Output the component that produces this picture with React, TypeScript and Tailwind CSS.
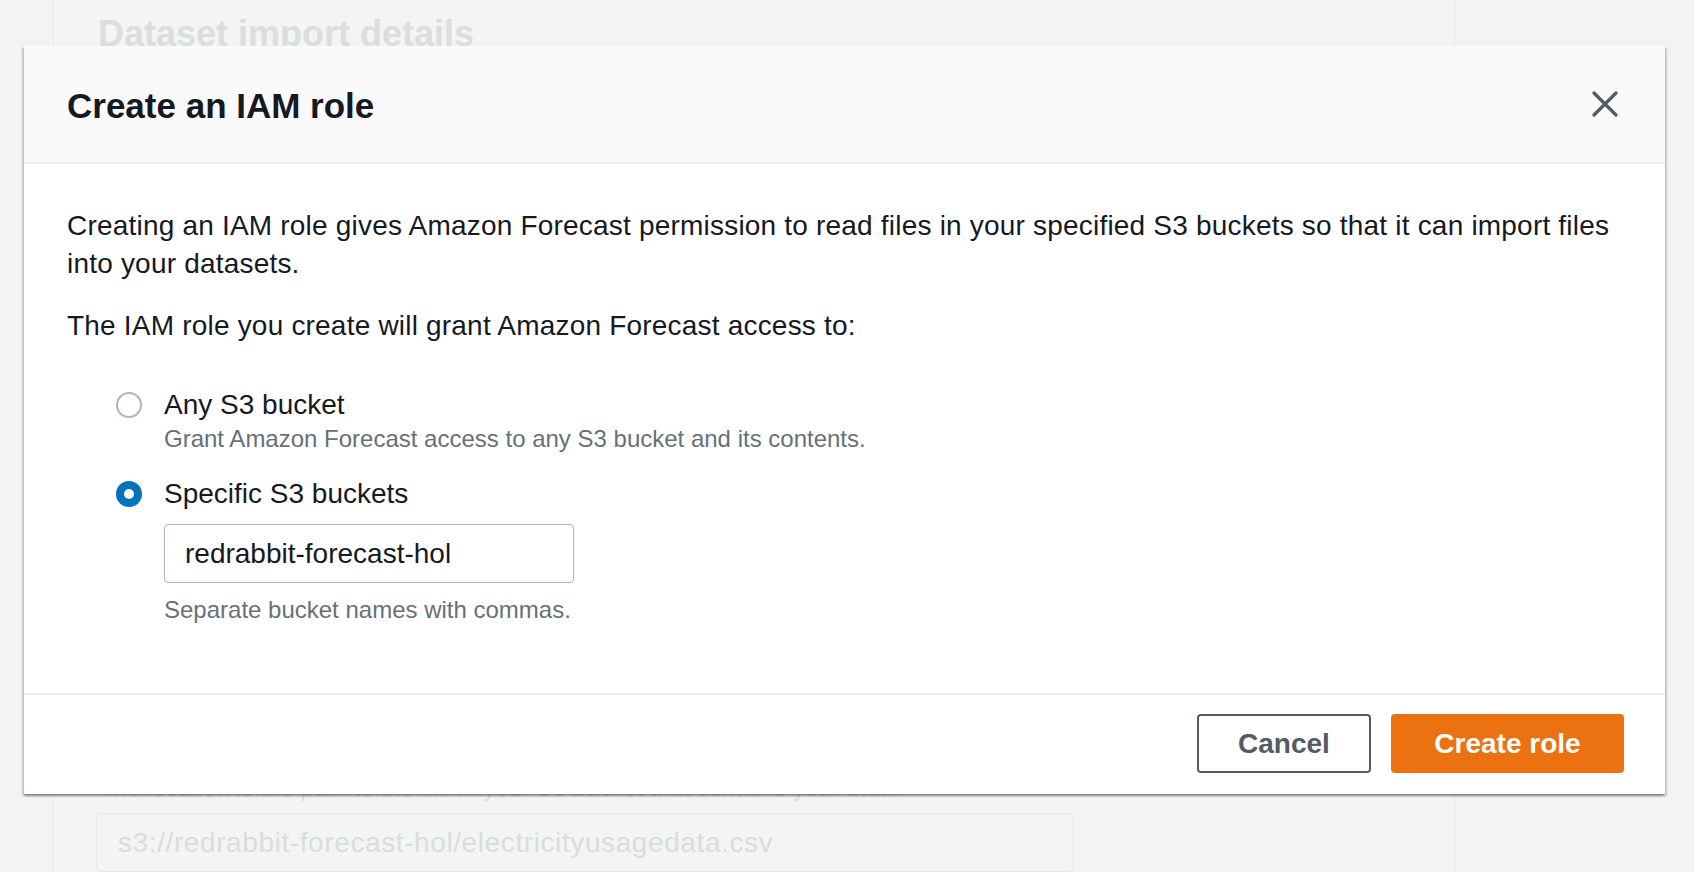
import React from "react";

function CloseIcon() {
  return (
    <svg width="26" height="26" viewBox="0 0 26 26" fill="none">
      <path
        d="M2 2L24 24M24 2L2 24"
        stroke="#545b64"
        strokeWidth="3.2"
        strokeLinecap="round"
      />
    </svg>
  );
}

function Radio({ checked }: { checked: boolean }) {
  return (
    <div className="flex h-[38px] items-center">
      {checked ? (
        <div className="flex h-[26px] w-[26px] items-center justify-center rounded-full bg-[#0073bb]">
          <div className="h-[10px] w-[10px] rounded-full bg-white" />
        </div>
      ) : (
        <div className="h-[26px] w-[26px] rounded-full border-2 border-[#aab7b8] bg-white" />
      )}
    </div>
  );
}

export default function App() {
  return (
    <div className="relative h-[872px] w-full overflow-hidden bg-[#f2f3f3] font-['Liberation_Sans',Arial,sans-serif]">
      {/* Page behind the dialog */}
      <div className="ml-[53px] h-full w-[1402px] border-x border-[#e9ebeb] bg-[#f3f4f4] pl-[42px]">
        <h2 className="ml-[2px] pt-[16px] text-[36px] leading-[36px] font-bold text-[#dadede]">
          Dataset import details
        </h2>
        <p className="ml-[3px] mt-[721px] text-[24px] leading-[30px] text-[#dadede]">
          The location is the path to the file in your S3 bucket that contains
          your data.
        </p>
        <div className="mt-[10px] flex h-[59px] w-[978px] items-center rounded-[4px] border border-[#e6e9e9] bg-[#f3f4f4] px-[21px] text-[28px] tracking-[0.6px] text-[#d9dddd]">
          s3://redrabbit-forecast-hol/electricityusagedata.csv
        </div>
      </div>

      {/* Modal */}
      <div className="absolute left-[24px] top-[46px] w-[1641px] bg-white shadow-[0_2px_2px_0_rgba(0,28,36,0.3),2px_2px_2px_0_rgba(0,28,36,0.15),-2px_2px_2px_0_rgba(0,28,36,0.15)]">
        <div className="flex h-[118px] items-center justify-between border-b-2 border-[#eaeded] bg-[#fafafa] pl-[43px] pr-[47px]">
          <h1 className="pt-[3px] text-[35px] leading-[36px] font-bold text-[#16191f]">
            Create an IAM role
          </h1>
          <button className="flex h-[26px] w-[26px] items-center justify-center">
            <CloseIcon />
          </button>
        </div>

        <div className="px-[43px] pb-[68px] pt-[43px] text-[#16191f]">
          <p className="text-[28px] leading-[38px] tracking-[0.2px]">
            Creating an IAM role gives Amazon Forecast permission to read files
            in your specified S3 buckets so that it can import files into your
            datasets.
          </p>
          <p className="mt-[24px] text-[28px] leading-[38px] tracking-[0.2px]">
            The IAM role you create will grant Amazon Forecast access to:
          </p>

          <div className="ml-[49px] mt-[41px]">
            <div className="flex gap-[22px]">
              <Radio checked={false} />
              <div>
                <div className="text-[28px] leading-[38px]">Any S3 bucket</div>
                <div className="text-[24px] leading-[30px] text-[#687078]">
                  Grant Amazon Forecast access to any S3 bucket and its
                  contents.
                </div>
              </div>
            </div>

            <div className="mt-[21px] flex gap-[22px]">
              <Radio checked={true} />
              <div>
                <div className="text-[28px] leading-[38px]">
                  Specific S3 buckets
                </div>
                <div className="mt-[11px] flex h-[59px] w-[410px] items-center rounded-[4px] border border-[#aab7b8] px-[20px] text-[28px]">
                  redrabbit-forecast-hol
                </div>
                <div className="mt-[12px] text-[24px] leading-[30px] text-[#687078]">
                  Separate bucket names with commas.
                </div>
              </div>
            </div>
          </div>
        </div>

        <div className="flex justify-end gap-[20px] border-t-2 border-[#eaeded] pb-[21px] pr-[41px] pt-[19px]">
          <button className="flex h-[59px] w-[174px] items-center justify-center rounded-[4px] border-2 border-[#545b64] bg-white text-[28px] font-bold text-[#545b64]">
            Cancel
          </button>
          <button className="flex h-[59px] w-[233px] items-center justify-center rounded-[4px] bg-[#ec7211] text-[28px] font-bold text-white">
            Create role
          </button>
        </div>
      </div>
    </div>
  );
}
